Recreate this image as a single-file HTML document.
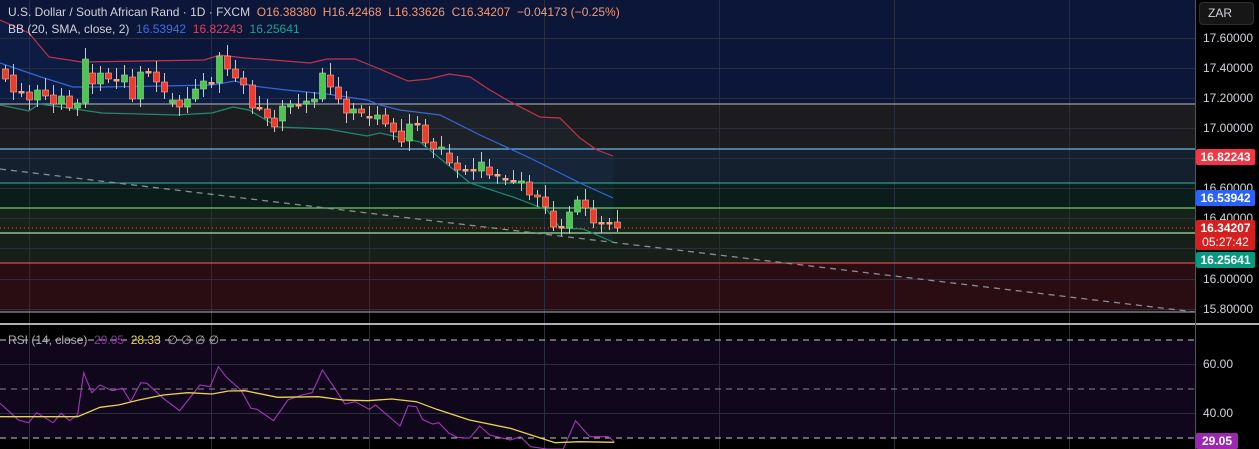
<!DOCTYPE html>
<html><head><meta charset="utf-8"><style>
body{margin:0;width:1259px;height:449px;overflow:hidden;background:#000;font-family:"Liberation Sans",sans-serif;position:relative}
.t{position:absolute;font-size:12px;white-space:nowrap}
.ax{position:absolute;left:1203px;font-size:12px;color:#d1d4dc}
.tag{position:absolute;left:1196px;width:59px;font-size:12px;color:#fff;text-align:center;border-radius:2px;font-weight:bold}
</style></head><body>
<svg id="s" width="1259" height="449" style="position:absolute;left:0;top:0">
<rect x="0" y="0" width="1195" height="104" fill="#0b1638"/>
<rect x="0" y="104" width="1195" height="45" fill="#1c1c1e"/>
<rect x="0" y="149" width="1195" height="34" fill="#15202e"/>
<rect x="0" y="183" width="1195" height="25" fill="#0b1d1a"/>
<rect x="0" y="208" width="1195" height="25" fill="#14221a"/>
<rect x="0" y="233" width="1195" height="30" fill="#172018"/>
<rect x="0" y="263" width="1195" height="49" fill="#2a0d12"/>
<rect x="0" y="340" width="1195" height="98" fill="#10071d"/>
<path id="bbfill" fill="rgba(40,120,200,0.07)"/>
<g id="grid" stroke="#2a2f3e" stroke-width="1"></g>
<g stroke-width="1.3">
<line x1="0" y1="104" x2="1195" y2="104" stroke="#9a9ca4"/>
<line x1="0" y1="149" x2="1195" y2="149" stroke="#6fb3e8"/>
<line x1="0" y1="183" x2="1195" y2="183" stroke="#2a9a88"/>
<line x1="0" y1="208" x2="1195" y2="208" stroke="#6cc56c"/>
<line x1="0" y1="233" x2="1195" y2="233" stroke="#a8e0a0"/>
<line x1="0" y1="263" x2="1195" y2="263" stroke="#d9474f"/>
<line x1="0" y1="312" x2="1195" y2="312" stroke="#8a8c94"/>
</g>
<line x1="0" y1="228" x2="1195" y2="228" stroke="#e04a3a" stroke-dasharray="1 3"/>
<line x1="0" y1="169" x2="1195" y2="312" stroke="#8a8c94" stroke-width="1.3" stroke-dasharray="6 5"/>
<g id="bb" fill="none" stroke-width="1.2"></g>
<g id="cd"></g>
<line x1="0" y1="324" x2="1259" y2="324" stroke="#e8e8e8" stroke-width="1.5"/>
<line x1="1195.5" y1="0" x2="1195.5" y2="449" stroke="#555" stroke-width="1"/>
<g stroke="#c8c8c8" stroke-dasharray="6 5" stroke-width="1">
<line x1="0" y1="340" x2="1195" y2="340"/><line x1="0" y1="389" x2="1195" y2="389" stroke="#888"/><line x1="0" y1="438" x2="1195" y2="438"/>
</g>
<g id="rsi" fill="none"></g>
</svg>
<div class="t" style="left:8px;top:5px;color:#d1d4dc">U.S. Dollar / South African Rand · 1D · FXCM&nbsp;&nbsp;<span style="color:#f39a75">O16.38380&nbsp;&nbsp;H16.42468&nbsp;&nbsp;L16.33626&nbsp;&nbsp;C16.34207&nbsp;&nbsp;−0.04173 (−0.25%)</span></div>
<div class="t" style="left:8px;top:22px;color:#d1d4dc">BB (20, SMA, close, 2)&nbsp;&nbsp;<span style="color:#3d6fe6">16.53942</span>&nbsp;&nbsp;<span style="color:#e0415a">16.82243</span>&nbsp;&nbsp;<span style="color:#22a090">16.25641</span></div>
<div class="t" style="left:8px;top:333px;color:#b0b0b0">RSI (14, close)&nbsp;&nbsp;<span style="color:#8a3aa0">29.05</span>&nbsp;&nbsp;<span style="color:#e8d44d">28.33</span>&nbsp;&nbsp;∅ ∅ ∅ ∅</div>
<div style="position:absolute;left:1199px;top:2px;width:55px;height:23px;background:#161616;border:1px solid #2e2e2e;border-radius:4px;box-sizing:border-box;color:#d1d4dc;font-size:12px;line-height:21px;padding-left:8px">ZAR</div>
<div class="ax" style="top:31px">17.60000</div>
<div class="ax" style="top:61px">17.40000</div>
<div class="ax" style="top:91px">17.20000</div>
<div class="ax" style="top:121px">17.00000</div>
<div class="ax" style="top:181px">16.60000</div>
<div class="ax" style="top:211px">16.40000</div>
<div class="ax" style="top:272px">16.00000</div>
<div class="ax" style="top:302px">15.80000</div>
<div class="ax" style="top:357px">60.00</div>
<div class="ax" style="top:406px">40.00</div>
<div class="tag" style="top:149px;height:16px;line-height:16px;background:#f23645">16.82243</div>
<div class="tag" style="top:190px;height:16px;line-height:16px;background:#2962ff">16.53942</div>
<div class="tag" style="top:220px;height:30px;line-height:14px;background:#d5201f;padding-top:1px;box-sizing:border-box">16.34207<br><span style="font-weight:normal">05:27:42</span></div>
<div class="tag" style="top:252px;height:16px;line-height:16px;background:#089981">16.25641</div>
<div class="tag" style="top:433px;height:16px;line-height:16px;background:#9c27b0;width:42px">29.05</div>
<script>
const NS="http://www.w3.org/2000/svg";
function el(p,t,a){const e=document.createElementNS(NS,t);for(const k in a)e.setAttribute(k,a[k]);p.appendChild(e);return e;}
const g=document.getElementById('grid');
[38,68,98,128,158,188,218,248,279,309,364,413].forEach(y=>el(g,'line',{x1:0,y1:y+.5,x2:1195,y2:y+.5}));
[29,211,369,544,719,894,1069].forEach(x=>el(g,'line',{x1:x+.5,y1:0,x2:x+.5,y2:449}));
function pl(p,pts,c,w){el(p,'polyline',{points:pts.map(q=>q.join(',')).join(' '),stroke:c,'stroke-width':w||1.2,fill:'none'});}
const bb=document.getElementById('bb');
const up=[[0,20],[29,33],[49,57],[82,62],[204,60],[220,55],[245,58],[286,61],[310,63],[327,59],[355,59],[375,67],[408,81],[429,79],[449,74],[470,77],[490,90],[507,100],[540,117],[560,118],[580,138],[597,150],[613,156]];
const mid=[[0,63],[41,77],[73,87],[102,87],[163,86],[212,85],[235,81],[253,86],[286,90],[327,94],[367,100],[380,105],[400,110],[440,115],[480,135],[530,158],[580,183],[613,198]];
const lo=[[0,105],[29,111],[39,104],[61,107],[102,113],[176,115],[212,113],[233,107],[249,110],[278,127],[327,129],[367,136],[380,133],[420,142],[470,183],[513,197],[547,210],[560,228],[583,229],[613,242]];
document.getElementById('bbfill').setAttribute('d','M'+up.map(q=>q.join(',')).join(' L')+' L'+lo.slice().reverse().map(q=>q.join(',')).join(' L')+'Z');
pl(bb,up,'#c2334a');pl(bb,mid,'#3467d8');pl(bb,lo,'#1f8a70');
const cd=document.getElementById('cd');
const C=[[5,'r',69,79],[13,'r',75,92],[21,'s',92],[29,'r',92,100],[37,'g',90,100],[45,'r',90,96],[53,'r',95,104],[61,'g',96,104],[69,'r',96,108],[77,'g',103,108],[85,'g',59,103],[92,'r',73,84],[100,'g',73,84],[108,'r',73,79],[116,'s',80],[124,'g',75,82],[132,'r',77,99],[140,'g',72,99],[148,'s',72],[156,'r',72,82],[164,'r',82,92],[172,'g',100,103],[179,'r',100,107],[187,'g',99,107],[195,'g',89,99],[203,'g',81,89],[211,'s',83],[219,'g',56,83],[227,'r',56,69],[235,'r',69,78],[243,'r',78,85],[252,'r',85,108],[259,'s',108],[267,'r',109,118],[274,'r',118,127],[282,'g',106,121],[290,'g',104,107],[298,'s',105],[306,'g',101,104],[314,'g',99,102],[322,'g',73,99],[330,'r',75,87],[338,'r',87,99],[346,'r',99,113],[353,'g',109,113],[361,'r',109,113],[369,'s',117],[377,'g',115,119],
[385,'r',115,124],[393,'r',123,132],[401,'r',131,142],[409,'g',124,141],[417,'s',124],[425,'r',125,143],[433,'r',142,149],[441,'g',147,149],[449,'r',153,163],[457,'r',163,170],[465,'s',170],[473,'s',170],[481,'g',162,171],[489,'r',167,175],[497,'s',175],[505,'s',179],[513,'s',181],[521,'g',181,183],[529,'r',182,195],[537,'r',195,197],[545,'r',197,207],[553,'r',211,227],[561,'s',227],[569,'g',212,228],[577,'g',200,212],[585,'r',200,208],[593,'r',209,223],[601,'s',223],[609,'s',223],[617,'r',222,228]];
C.forEach((c,i)=>{const x=c[0];let a=c[2],b=c[3]||c[2];const h=4+(i*7%9),l=3+(i*5%8);
el(cd,'line',{x1:x+.5,y1:a-h,x2:x+.5,y2:b+l,stroke:'#c9c9c9','stroke-width':1});
const col=c[1]=='g'?'#4cc552':c[1]=='r'?'#ef3b2c':'#f5a183';
if(c[1]=='s')el(cd,'rect',{x:x-2.5,y:a-1,width:6,height:2.5,fill:col});
else el(cd,'rect',{x:x-2.5,y:a,width:6,height:Math.max(b-a,2),fill:col,stroke:c[1]=='r'?'#f7b09a':'#8fe08f','stroke-width':.6});});
const r=document.getElementById('rsi');
const sx=2.45;function cv(a){return a.map(p=>[(p[0]/sx).toFixed(1),(320+p[1]/3).toFixed(1)]);}
pl(r,cv([[0,250],[45,300],[70,308],[90,278],[130,308],[150,280],[170,302],[190,285],[205,158],[225,218],[245,195],[275,212],[300,205],[320,245],[345,188],[360,190],[400,235],[440,272],[490,195],[515,200],[535,140],[555,172],[590,210],[615,265],[630,268],[670,302],[705,240],[740,225],[765,218],[790,150],[820,205],[845,252],[870,245],[905,268],[920,255],[980,318],[1000,257],[1020,260],[1035,298],[1060,312],[1075,308],[1100,340],[1120,352],[1150,355],[1175,318],[1200,345],[1250,360],[1275,350],[1300,380],[1340,387],[1380,387],[1410,302],[1445,350],[1490,350],[1505,365]]),'#a336b8',1.1);
pl(r,cv([[0,290],[190,290],[245,262],[290,255],[340,240],[400,225],[460,218],[520,222],[560,213],[600,212],[680,232],[780,230],[840,240],[900,242],[960,237],[1020,245],[1070,268],[1150,300],[1250,325],[1360,368],[1420,365],[1505,367]]),'#e8d44d',1.3);
</script>
</body></html>
